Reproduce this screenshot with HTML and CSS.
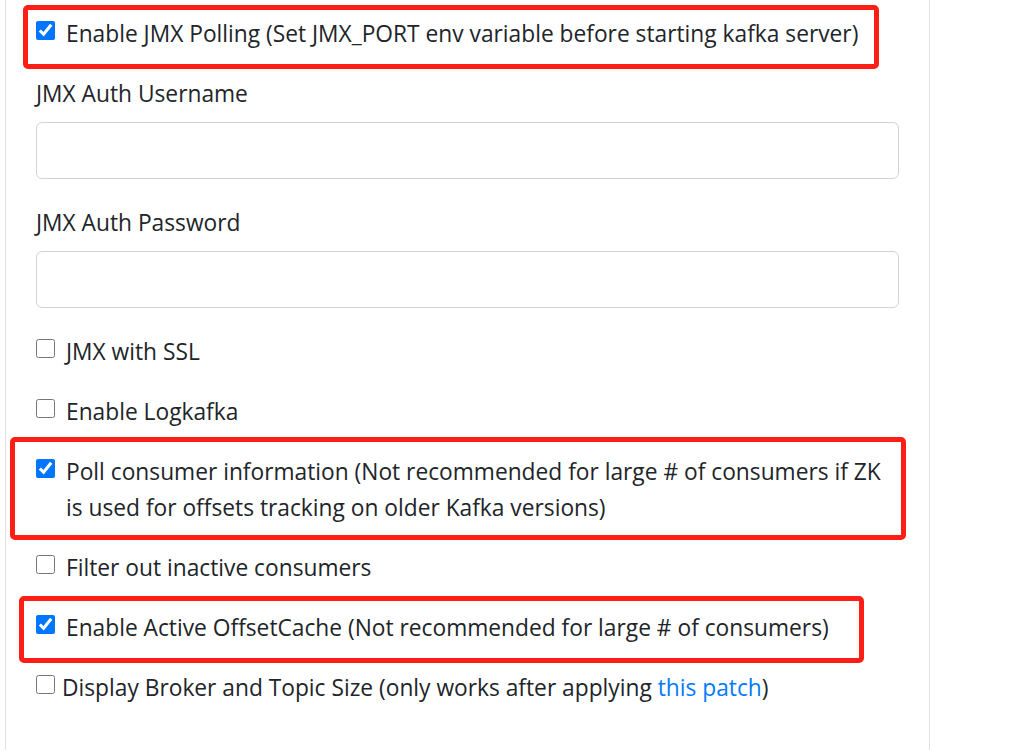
FILE: index.html
```html
<!DOCTYPE html>
<html lang="en">
<head>
<meta charset="utf-8">
<title>Cluster settings</title>
<link rel="stylesheet" href="styles.css">
</head>
<body>
<div class="card">
  <div class="card-body">
    <div class="form-group form-check annotated">
      <input class="form-check-input" type="checkbox" id="jmxEnabled" checked>
      <label class="form-check-label" for="jmxEnabled">Enable JMX Polling (Set JMX_PORT env variable before starting kafka server)</label>
      <span class="mark mark-1"></span>
    </div>
    <div class="form-group field-group">
      <label class="field-label" for="jmxUser">JMX Auth Username</label>
      <input class="form-control" type="text" id="jmxUser">
    </div>
    <div class="form-group field-group">
      <label class="field-label" for="jmxPass">JMX Auth Password</label>
      <input class="form-control" type="password" id="jmxPass">
    </div>
    <div class="form-group form-check">
      <input class="form-check-input" type="checkbox" id="jmxSsl">
      <label class="form-check-label" for="jmxSsl">JMX with SSL</label>
    </div>
    <div class="form-group form-check">
      <input class="form-check-input" type="checkbox" id="logkafka">
      <label class="form-check-label" for="logkafka">Enable Logkafka</label>
    </div>
    <div class="form-group form-check annotated">
      <input class="form-check-input" type="checkbox" id="pollConsumers" checked>
      <label class="form-check-label" for="pollConsumers">Poll consumer information (Not recommended for large # of consumers if ZK is used for offsets tracking on older Kafka versions)</label>
      <span class="mark mark-2"></span>
    </div>
    <div class="form-group form-check">
      <input class="form-check-input" type="checkbox" id="filterInactive">
      <label class="form-check-label" for="filterInactive">Filter out inactive consumers</label>
    </div>
    <div class="form-group form-check annotated">
      <input class="form-check-input" type="checkbox" id="offsetCache" checked>
      <label class="form-check-label" for="offsetCache">Enable Active OffsetCache (Not recommended for large # of consumers)</label>
      <span class="mark mark-3"></span>
    </div>
    <div class="form-group plain-check">
      <input class="plain-input" type="checkbox" id="displaySize">
      <label class="plain-label" for="displaySize">Display Broker and Topic Size (only works after applying <a href="#" class="link">this patch</a>)</label>
    </div>
  </div>
</div>
</body>
</html>
```
FILE: styles.css
```css
html, body {
  margin: 0;
  padding: 0;
  background: #ffffff;
}
body {
  font-family: "Open Sans", "Noto Sans", "Liberation Sans", sans-serif;
  font-size: 22.75px;
  line-height: 36px;
  color: #212529;
  overflow: hidden;
}
.card {
  margin-left: 5px;
  width: 925px;
  box-sizing: border-box;
  border-left: 1px solid #dee2e6;
  border-right: 1px solid #dee2e6;
  min-height: 750px;
}
.card-body {
  padding: 16px 30px 0 30px;
}
.form-group {
  margin-bottom: 24px;
}
.field-group {
  margin-bottom: 26px;
}
.field-label {
  display: block;
  margin-bottom: 10px;
}
.form-control {
  display: block;
  box-sizing: border-box;
  width: 100%;
  height: 57px;
  padding: 9px 18px;
  font: inherit;
  color: #495057;
  background: #fff;
  border: 1.5px solid #ced4da;
  border-radius: 6px;
}
.form-check {
  position: relative;
  display: block;
  padding-left: 30px;
}
.form-check-input {
  position: absolute;
  left: 0;
  top: 5px;
  margin: 0;
  width: 19px;
  height: 19px;
  accent-color: #0075ff;
}
.form-check-label {
  display: inline-block;
}
.plain-check {
  display: flex;
  align-items: flex-start;
}
.plain-input {
  flex: none;
  margin: 5px 7px 0 0;
  width: 19px;
  height: 19px;
}
.link {
  color: #007bff;
  text-decoration: none;
}
.annotated {
  position: relative;
}
.mark {
  position: absolute;
  border: 5px solid #ff1e16;
  border-radius: 5px;
  box-sizing: border-box;
  pointer-events: none;
}
.mark-1 {
  left: -13px;
  top: -11px;
  width: 856px;
  height: 64px;
}
.mark-2 {
  left: -26px;
  top: -17px;
  width: 896px;
  height: 103px;
}
.mark-3 {
  left: -17px;
  top: -14px;
  width: 845px;
  height: 67px;
}
```
